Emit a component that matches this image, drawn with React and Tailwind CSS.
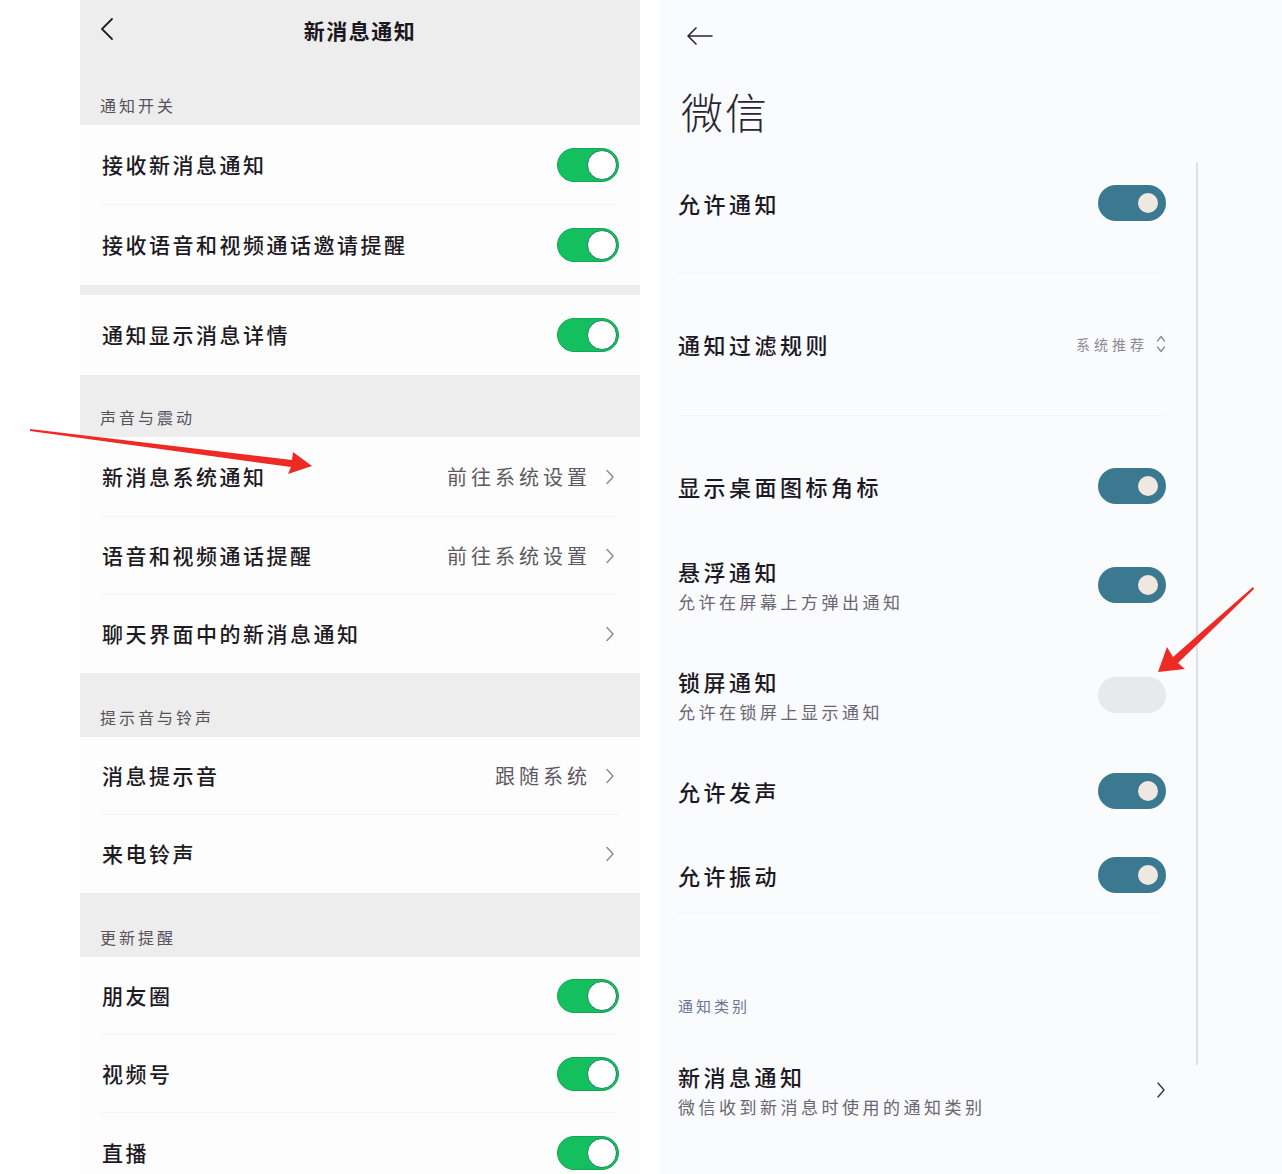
import React from 'react';

const font = { fontFamily: '"Noto Sans CJK SC", "Noto Sans", sans-serif' };

const GreenToggle = () => (
  <div className="w-[62px] h-[34px] rounded-full bg-[#14c05e] border border-[#10a857] flex items-center justify-end pr-[1px]">
    <div className="w-[30px] h-[30px] rounded-full bg-white border-[1.5px] border-[#1c7d60]" />
  </div>
);

const TealToggle = ({ on = true }) =>
  on ? (
    <div className="w-[68px] h-[36px] rounded-full bg-[#3a7990] flex items-center justify-end pr-[8px]">
      <div className="w-[20px] h-[20px] rounded-full bg-[#efe8e1]" />
    </div>
  ) : (
    <div className="w-[68px] h-[36px] rounded-full bg-[#e7e9ec]" />
  );

const Chevron = () => (
  <svg width="10" height="16" viewBox="0 0 10 16" fill="none">
    <path d="M2 1.5 L8 8 L2 14.5" stroke="#8a8790" strokeWidth="1.4" strokeLinecap="round" strokeLinejoin="round" />
  </svg>
);

const SectionHead = ({ label, h }) => (
  <div className={`shrink-0 bg-[#ededee] flex items-end px-[20px] pb-[8px] ${h}`}>
    <span className="text-[16px] tracking-[3px] text-[#57525c]">{label}</span>
  </div>
);

const Row = ({ label, right, toggle, last, h = 'h-[79px]' }) => (
  <div className={`shrink-0 bg-[#fdfdfe] pl-[22px] pr-[21px] ${h}`}>
    <div className={`h-full flex items-center justify-between ${last ? '' : 'border-b border-[#f3f3f5]'}`}>
      <span className="text-[21px] tracking-[2.5px] font-medium text-[#1e1a24]">{label}</span>
      {toggle ? (
        <GreenToggle />
      ) : (
        <div className="flex items-center gap-[14px] pr-[4px]">
          {right && <span className="text-[20px] tracking-[4px] text-[#5d5862]">{right}</span>}
          <Chevron />
        </div>
      )}
    </div>
  </div>
);

const RightRow = ({ title, sub, children, className }) => (
  <div className={`shrink-0 flex items-center justify-between h-[72px] ${className || ''}`}>
    <div className="flex flex-col">
      <span className="text-[22px] leading-[28px] tracking-[3.5px] font-medium text-[#1d1826]">{title}</span>
      {sub && <span className="text-[17px] leading-[24px] mt-[5px] tracking-[3.5px] text-[#6b6573]">{sub}</span>}
    </div>
    {children}
  </div>
);

const Divider = ({ className }) => <div className={`shrink-0 h-px bg-[#f3f5f8] ${className || ''}`} />;

export default function App() {
  return (
    <div className="relative w-[1282px] h-[1174px] bg-white overflow-hidden flex items-start" style={font}>
      {/* left: wechat settings */}
      <div className="w-[80px] shrink-0" />
      <div className="w-[560px] shrink-0 flex flex-col">
        <div className="shrink-0 bg-[#ededee] h-[62px] relative flex items-center justify-center">
          <svg className="absolute left-[20px] top-[17px]" width="14" height="24" viewBox="0 0 14 24" fill="none">
            <path d="M12 2 L2 12 L12 22" stroke="#222" strokeWidth="1.8" strokeLinecap="round" strokeLinejoin="round" />
          </svg>
          <span className="text-[21px] font-bold tracking-[1.5px] text-[#1b1620]">新消息通知</span>
        </div>
        <SectionHead label="通知开关" h="h-[63px]" />
        <Row label="接收新消息通知" toggle h="h-[80px]" />
        <Row label="接收语音和视频通话邀请提醒" toggle last h="h-[80px]" />
        <div className="shrink-0 h-[10px] bg-[#ededee]" />
        <Row label="通知显示消息详情" toggle last h="h-[80px]" />
        <SectionHead label="声音与震动" h="h-[62px]" />
        <Row label="新消息系统通知" right="前往系统设置" h="h-[80px]" />
        <Row label="语音和视频通话提醒" right="前往系统设置" h="h-[78px]" />
        <Row label="聊天界面中的新消息通知" last h="h-[78px]" />
        <SectionHead label="提示音与铃声" h="h-[64px]" />
        <Row label="消息提示音" right="跟随系统" h="h-[78px]" />
        <Row label="来电铃声" last h="h-[78px]" />
        <SectionHead label="更新提醒" h="h-[64px]" />
        <Row label="朋友圈" toggle h="h-[78px]" />
        <Row label="视频号" toggle h="h-[78px]" />
        <Row label="直播" toggle last h="h-[80px]" />
      </div>

      {/* right: system app notification page */}
      <div className="w-[20px] shrink-0" />
      <div className="flex-1 self-stretch bg-[#f9fbfd] relative pl-[18px] pr-[116px] flex flex-col">
        <div className="shrink-0 h-[165px] flex flex-col">
          <svg className="mt-[26px] ml-[8px]" width="28" height="20" viewBox="0 0 28 20" fill="none">
            <path d="M26 10 H3 M10 2 L2 10 L10 18" stroke="#2a2530" strokeWidth="1.6" strokeLinecap="round" strokeLinejoin="round" />
          </svg>
          <span className="mt-[37px] ml-[3px] text-[42px] leading-[56px] font-light tracking-[2px] text-[#2a2433]">微信</span>
        </div>
        <RightRow title="允许通知" className="h-[76px]">
          <TealToggle />
        </RightRow>
        <Divider className="mt-[32px]" />
        <RightRow title="通知过滤规则" className="mt-[34px]">
          <div className="flex items-center gap-[8px]">
            <span className="text-[14px] tracking-[4px] text-[#8d8995]">系统推荐</span>
            <svg width="10" height="20" viewBox="0 0 10 20" fill="none">
              <path d="M1.5 7 L5 2.5 L8.5 7 M1.5 13 L5 17.5 L8.5 13" stroke="#8d8995" strokeWidth="1.3" strokeLinecap="round" strokeLinejoin="round" />
            </svg>
          </div>
        </RightRow>
        <Divider className="mt-[35px]" />
        <RightRow title="显示桌面图标角标" className="mt-[34px]">
          <TealToggle />
        </RightRow>
        <RightRow title="悬浮通知" sub="允许在屏幕上方弹出通知" className="mt-[27px]">
          <TealToggle />
        </RightRow>
        <RightRow title="锁屏通知" sub="允许在锁屏上显示通知" className="mt-[38px]">
          <TealToggle on={false} />
        </RightRow>
        <RightRow title="允许发声" className="mt-[24px]">
          <TealToggle />
        </RightRow>
        <RightRow title="允许振动" className="mt-[12px]">
          <TealToggle />
        </RightRow>
        <Divider className="mt-[2px]" />
        <div className="shrink-0 mt-[77px] h-[30px] flex items-center">
          <span className="text-[15px] tracking-[3px] text-[#6b7396]">通知类别</span>
        </div>
        <RightRow title="新消息通知" sub="微信收到新消息时使用的通知类别" className="mt-[33px]">
          <svg width="10" height="18" viewBox="0 0 10 18" fill="none">
            <path d="M2 2 L8 9 L2 16" stroke="#3a3540" strokeWidth="1.4" strokeLinecap="round" strokeLinejoin="round" />
          </svg>
        </RightRow>
        {/* scrollbar track */}
        <div className="absolute left-[536px] top-[162px] w-[2px] h-[903px] bg-[#dde1e8]" />
      </div>

      {/* red annotation arrows */}
      <svg className="absolute inset-0 pointer-events-none" width="1282" height="1174" viewBox="0 0 1282 1174">
        <polygon points="30,429 30,431 291,467 288,474 312,466 293,452 292,460" fill="#ee2a24" />
        <polygon points="1253,587 1254,589 1178,663 1185,669 1158,672 1167,647 1173,657" fill="#ee2a24" />
      </svg>
    </div>
  );
}
